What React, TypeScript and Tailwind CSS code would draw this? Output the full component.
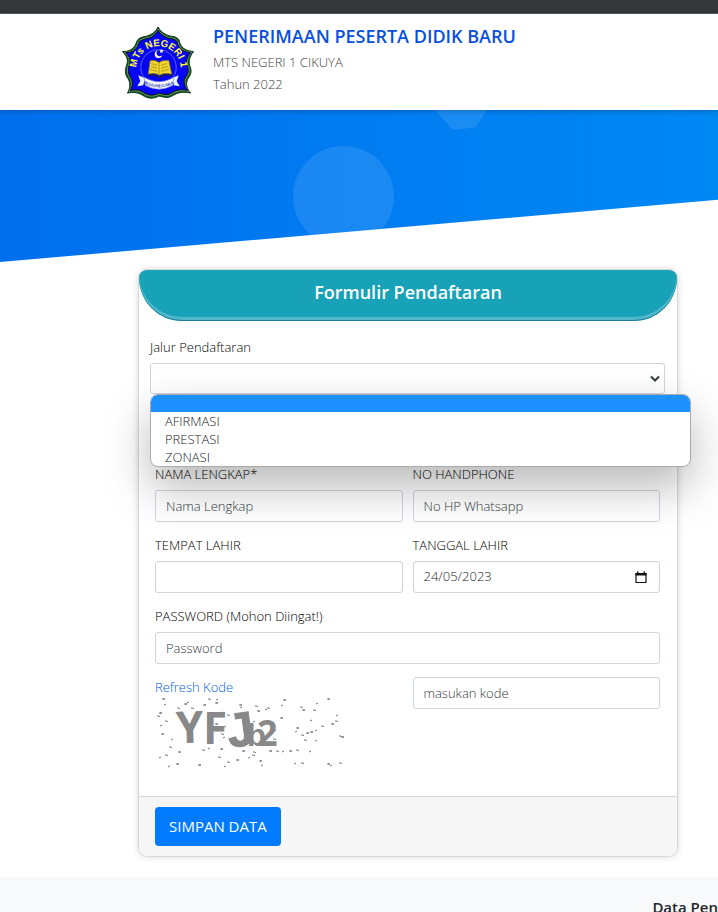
import React from "react";

const fieldClass =
  "block w-full min-w-0 rounded-[3px] border border-[#ced4da] bg-white px-2.5 text-[13px] font-light text-[#343a40] placeholder:text-[#343a40] outline-none";
const inputClass = `${fieldClass} h-8`;
const labelClass = "mb-1.5 block text-[13px] leading-5 font-light text-black";

function Logo() {
  const tips =
    "M36 1 C40 8 46 10 53 11 C56 12 58 14 58 17 C60 23 65 25 72 26 C68 31 67 35 68 40 C71 46 69 50 66 54 C64 59 65 63 69 68 C61 66 55 68 52 70 C46 74 42 72 37 71 C31 74 26 74 20 70 C15 67 10 67 5 68 C8 63 8 58 6 54 C3 50 2 46 4 40 C6 35 5 31 0 26 C7 26 12 23 14 17 C15 13 18 12 21 11 C28 10 33 7 36 1Z";
  return (
    <svg className="block overflow-visible" width="73" height="73" viewBox="0 0 73 74" role="img" aria-label="Logo MTs Negeri 1">
      <path d={tips} fill="#0a5a20" stroke="#12301a" strokeWidth="1" />
      <path d={tips} fill="#06380f" stroke="#9dbb7c" strokeWidth="0.8" transform="translate(2.2 2.3) scale(.94)" />
      <path d={tips} fill="#0606f2" stroke="#0a0c30" strokeWidth="1" transform="translate(3.3 3.4) scale(.91)" />
      <circle cx="36.5" cy="42" r="18" fill="none" stroke="#6c78ff" strokeWidth="0.8" />
      <defs>
        <path id="arc" d="M14 43 A 22.500 22.500 0 0 1 59 43" />
        <path id="ribbon" d="M22 58.500 Q37 66 52 58.500" />
      </defs>
      <text fill="#fbf63c" fontSize="10" fontWeight="700" fontFamily="Liberation Sans, sans-serif">
        <textPath href="#arc" startOffset="50%" textAnchor="middle">MTs NEGERI 1</textPath>
      </text>
      <path d="M36 24.500 A4 4 0 1 0 40.500 29.500 A3.400 3.400 0 1 1 36 24.500Z" fill="#fdfbc0" />
      <path d="M39.500 23l.7 1.500 1.600.1-1.200 1.100.4 1.600-1.500-.8-1.400.8.3-1.600-1.200-1.100 1.700-.1z" fill="#fdfbc0" />
      <path d="M28 35 Q33 34 37 37 Q41 34 47 35 L50 49 Q42 47 37.500 50 Q33 47 26 49Z" fill="#f0d52e" stroke="#6d611e" strokeWidth="0.7" />
      <path d="M37 37V49M29 38l6 2M29 41l6 2M28 44l7 2M45 38l-6 2M46 41l-7 2M47 44l-8 2" stroke="#9d8719" strokeWidth="0.8" />
      <path d="M26 50Q33 48 37.500 52Q42 48 50 50" fill="none" stroke="#242244" strokeWidth="1.500" />
      <path d="M16 50l7 3-2 7-6 1 3-5zM57 50l-7 3 2 7 6 1-3-5z" fill="#e8f4ff" />
      <path d="M22 52Q37 61 52 52L51 60Q37 68 23 60Z" fill="#f5f8ff" stroke="#7582c9" strokeWidth="0.600" />
      <text fill="#2432a8" fontSize="4.500" fontWeight="700" fontFamily="Liberation Serif, serif">
        <textPath href="#ribbon" startOffset="50%" textAnchor="middle">BOJONEGARA</textPath>
      </text>
    </svg>
  );
}

const dots = [
  [7, 2], [9, 7], [22, 11], [29, 7], [32, 5], [53, 2], [60, 6], [61, 2], [2, 19], [4, 16], [5, 28], [10, 24], [6, 37], [16, 42],
  [14, 50], [23, 55], [4, 60], [10, 58], [21, 67], [13, 69], [36, 11], [48, 8], [66, 15], [72, 18], [84, 8], [85, 10], [100, 9], [102, 14],
  [110, 12], [112, 11], [128, 3], [126, 8], [145, 10], [147, 13], [161, 6], [158, 13], [172, 2], [181, 18], [180, 24], [176, 27], [155, 23],
  [166, 29], [141, 31], [140, 34], [146, 38], [155, 35], [160, 33], [149, 43], [151, 36], [160, 43], [184, 39], [186, 40], [154, 54],
  [141, 53], [134, 54], [127, 54], [121, 54], [114, 54], [107, 48], [98, 55], [87, 54], [93, 60], [97, 58], [104, 64], [106, 68],
  [72, 65], [81, 63], [69, 69], [63, 60], [65, 52], [53, 51], [47, 53], [43, 68], [139, 66], [146, 66], [172, 67], [175, 68], [184, 66],
  [125, 21], [119, 33], [118, 42], [115, 30], [98, 24], [88, 20], [60, 27], [69, 29], [35, 28], [39, 23], [68, 40], [66, 37],
];

function Captcha() {
  return (
    <svg className="block overflow-visible" width="190" height="73" viewBox="0 0 190 73" role="img" aria-label="Kode keamanan">
      {dots.map(([x, y], i) => (
        <path
          key={i}
          d={i % 3 === 0 ? `M${x} ${y}h3m-1-1v2` : i % 3 === 1 ? `M${x} ${y + 1}l2-1` : `M${x} ${y}h2l1 1`}
          stroke="#777"
          strokeWidth="1"
          fill="none"
        />
      ))}
      <g fill="#888" fontFamily="Open Sans, sans-serif" fontWeight="700">
        <text x="21" y="46" fontSize="44" transform="rotate(-2 30 30)">Y</text>
        <text x="48" y="47" fontSize="44">F</text>
        <text x="72" y="49" fontSize="48" stroke="#888" strokeWidth="1" fontFamily="Liberation Sans, sans-serif" transform="rotate(-8 85 32)">J</text>
        <text x="92" y="49" fontSize="31" fontFamily="Liberation Sans, sans-serif">b</text>
        <text x="102" y="49" fontSize="36">2</text>
      </g>
    </svg>
  );
}

export default function App() {
  return (
    <div className="min-h-screen overflow-x-hidden bg-white font-['Open_Sans','Noto_Sans',sans-serif]">
      <div className="h-3.5 border-b border-[#5b5c5f] bg-[#35363a]" />
      <header className="relative z-10 flex h-24 items-start bg-white pl-[122px] shadow-[0_1px_5px_rgba(0,0,0,0.25)]">
        <div className="mt-3 shrink-0"><Logo /></div>
        <div className="ml-[18px] pt-[9px]">
          <h1 className="mb-0.5 text-[18px] leading-[26px] font-semibold whitespace-nowrap text-[#0850dc]">PENERIMAAN PESERTA DIDIK BARU</h1>
          <p className="text-[13px] leading-[22px] font-light text-[#444]">MTS NEGERI 1 CIKUYA</p>
          <p className="text-[13px] leading-[22px] font-light text-[#444]">Tahun 2022</p>
        </div>
      </header>
      <div className="relative h-[152px] overflow-hidden bg-linear-to-r from-[#006fee] to-[#0088f3] [clip-path:polygon(0_0,100%_0,100%_59%,0_100%)]">
        <div className="absolute top-9 left-[293px] size-[101px] rounded-full bg-white/10" />
        <div className="absolute top-0 left-[435px] h-5 w-[52px] bg-white/10 [clip-path:polygon(0_0,100%_0,78%_88%,34%_100%)]" />
      </div>

      <main className="pt-[7px] pr-10 pb-5 pl-[138px]">
        <form
          className="rounded-[10px] border border-[#d9d9d9] bg-white shadow-[0_0_6px_rgba(0,0,0,0.16)]"
          onSubmit={(e) => e.preventDefault()}
        >
          <div className="rounded-t-[9px] rounded-b-[50px] bg-[#18a2b8] pt-[9px] pb-4 text-center shadow-[inset_0_-1px_0_#178296,inset_0_-4px_0_#50b8c9]">
            <h2 className="text-[18px] leading-[26px] font-semibold text-white">Formulir Pendaftaran</h2>
          </div>
          <div className="pt-4 pr-3 pl-[11px]">
            <label htmlFor="jalur" className={labelClass}>Jalur Pendaftaran</label>
            <div className="relative">
              <select id="jalur" defaultValue="" className={`${fieldClass} h-[31px] appearance-none`}>
                <option value=""></option>
                <option>AFIRMASI</option>
                <option>PRESTASI</option>
                <option>ZONASI</option>
              </select>
              <svg className="pointer-events-none absolute top-3 right-1" width="12" height="8" viewBox="0 0 12 8" fill="none" stroke="#343a40" strokeWidth="2">
                <path d="M2 1.500L6 5.500L10 1.500" />
              </svg>
              <ul
                role="listbox"
                aria-label="Jalur Pendaftaran"
                className="absolute top-full -right-[26px] left-0 z-20 overflow-hidden rounded-lg border border-[#aaa] bg-white text-[13px] leading-[18px] font-light text-[#212529] shadow-[0_20px_45px_rgba(0,0,0,0.28)]"
              >
                <li role="option" aria-selected="true" className="h-[17px] bg-[#1e90ff]" />
                <li role="option" aria-selected="false" className="px-3.5">AFIRMASI</li>
                <li role="option" aria-selected="false" className="px-3.5">PRESTASI</li>
                <li role="option" aria-selected="false" className="px-3.5">ZONASI</li>
              </ul>
            </div>
          </div>

          <div className="grid grid-cols-2 gap-x-2.5 gap-y-[13px] pt-[70px] pr-[17px] pb-[26px] pl-4">
            <div>
              <label htmlFor="nama" className={labelClass}>NAMA LENGKAP*</label>
              <input id="nama" className={inputClass} placeholder="Nama Lengkap" />
            </div>
            <div>
              <label htmlFor="hp" className={labelClass}>NO HANDPHONE</label>
              <input id="hp" className={inputClass} placeholder="No HP Whatsapp" />
            </div>
            <div>
              <label htmlFor="tempat" className={labelClass}>TEMPAT LAHIR</label>
              <input id="tempat" className={inputClass} />
            </div>
            <div>
              <label htmlFor="tanggal" className={labelClass}>TANGGAL LAHIR</label>
              <div className="flex h-8 items-center rounded-[3px] border border-[#ced4da] bg-white pr-3 pl-2.5">
                <input id="tanggal" className="min-w-0 flex-1 text-[13px] font-light text-[#212529] outline-none" defaultValue="24/05/2023" />
                <button type="button" aria-label="Pilih tanggal">
                  <svg width="12" height="13" viewBox="0 0 12 13" fill="none" className="block">
                    <path d="M1 2.500h10v9H1z" stroke="#111" strokeWidth="1.200" />
                    <path d="M0.500 2h11v2.500h-11zM2 0.500h1.500V3H2zM8.500 0.500H10V3H8.500z" fill="#111" />
                  </svg>
                </button>
              </div>
            </div>
            <div className="col-span-2">
              <label htmlFor="sandi" className={labelClass}>PASSWORD (Mohon Diingat!)</label>
              <input id="sandi" type="password" className={inputClass} placeholder="Password" />
            </div>
            <div>
              <a href="#kode" className="block text-[13px] leading-5 font-light text-[#0060d8]">Refresh Kode</a>
              <Captcha />
            </div>
            <div>
              <input id="kode" aria-label="Kode" className={inputClass} placeholder="masukan kode" />
            </div>
          </div>

          <div className="rounded-b-[9px] border-t border-[#d5d5d5] bg-[#f6f6f6] px-4 py-2.5">
            <button type="submit" className="h-[39px] rounded-[4px] bg-[#007bff] px-3.5 text-[15px] text-white">SIMPAN DATA</button>
          </div>
        </form>
      </main>

      <section className="overflow-hidden bg-[#f8f9fb] pt-[18px] text-right">
        <h3 className="text-[15px] leading-6 font-semibold whitespace-nowrap text-[#212529]">Data Pen</h3>
      </section>
    </div>
  );
}
